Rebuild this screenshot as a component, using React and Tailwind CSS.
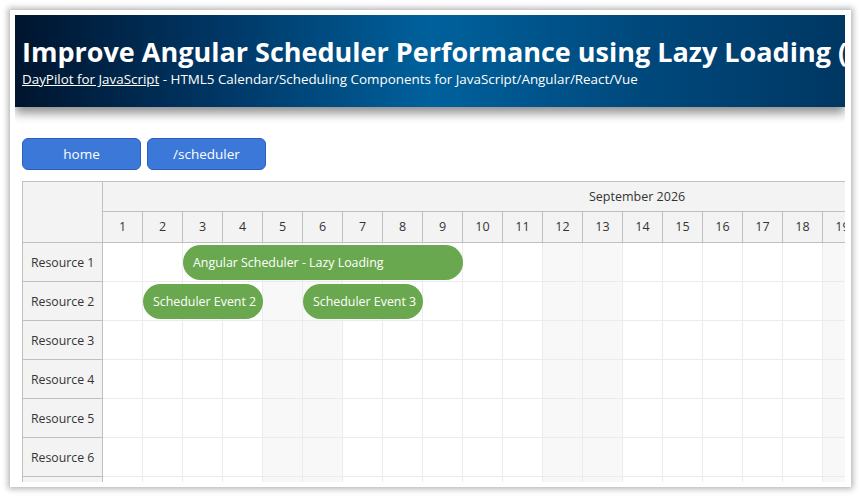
import React from "react"

const days = Array.from({ length: 20 }, (_, i) => i + 1)
const weekend = [5, 6, 12, 13, 19, 20]
const resources = ["Resource 1", "Resource 2", "Resource 3", "Resource 4", "Resource 5", "Resource 6", "Resource 7"]

const events = [
  { row: 0, start: 3, end: 9, text: "Angular Scheduler - Lazy Loading" },
  { row: 1, start: 2, end: 4, text: "Scheduler Event 2" },
  { row: 1, start: 6, end: 8, text: "Scheduler Event 3" },
]

const font = { fontFamily: '"Open Sans", "Noto Sans", sans-serif' }

function Scheduler() {
  return (
    <div className="border-l border-t border-[#c0c0c0] overflow-hidden flex" style={font}>
      {/* row headers */}
      <div className="w-[80px] shrink-0 bg-[#f3f3f3]">
        <div className="h-[61px] border-b border-r border-[#c0c0c0]" />
        {resources.map((r) => (
          <div key={r} className="h-[39px] border-b border-r border-[#c0c0c0] flex items-center pl-[8px] pt-[3px] text-[12.3px] text-[#333]">
            {r}
          </div>
        ))}
      </div>
      {/* timeline */}
      <div className="flex flex-col shrink-0">
        <div className="h-[30px] bg-[#f3f3f3] border-b border-[#c0c0c0] flex items-center pt-[2px] pl-[486px] text-[12.5px] text-[#333]">
          September 2026
        </div>
        <div className="flex h-[31px] bg-[#f3f3f3] border-b border-[#c0c0c0]">
          {days.map((d) => (
            <div key={d} className="w-[40px] shrink-0 border-r border-[#c0c0c0] flex items-center justify-center text-[12.5px] text-[#333]">
              {d}
            </div>
          ))}
        </div>
        {resources.map((r, ri) => (
          <div key={r} className="relative flex h-[39px]">
            {days.map((d) => (
              <div
                key={d}
                className={
                  "w-[40px] shrink-0 border-r border-b border-[#ebebeb] " +
                  (weekend.includes(d) ? "bg-[#f8f8f8]" : "bg-white")
                }
              />
            ))}
            {events
              .filter((e) => e.row === ri)
              .map((e) => (
                <div
                  key={e.text}
                  className="absolute top-[2px] h-[35px] rounded-full bg-[#6aa84f] text-white text-[12.4px] flex items-center pl-[10px] pt-[1px] whitespace-nowrap"
                  style={{ left: (e.start - 1) * 40, width: (e.end - e.start + 1) * 40 }}
                >
                  {e.text}
                </div>
              ))}
          </div>
        ))}
      </div>
    </div>
  )
}

export default function App() {
  return (
    <div className="w-[860px] h-[497px] bg-white overflow-hidden pt-[10px] pl-[10px]">
      <div className="w-[841px] h-[477px] bg-white shadow-[0_0_6px_2px_rgba(0,0,0,0.3)] pl-[5px] pr-[6px] pt-[5px] pb-[5px]">
        <div className="w-[830px] h-[467px] overflow-hidden bg-white">
          <div
            className="h-[92px] bg-[linear-gradient(to_right,#00152e_0%,#003766_25%,#00619c_50%,#00497d_75%,#003763_100%)] pl-[7px] pt-[20px] text-white shadow-[0_6px_10px_rgba(0,0,0,0.45)] relative"
            style={font}
          >
            <div className="text-[27px] font-bold leading-[34px] whitespace-nowrap">
              Improve Angular Scheduler Performance using Lazy Loading (Open-Source)
            </div>
            <div className="text-[13.4px] leading-[20px] whitespace-nowrap">
              <a className="underline">DayPilot for JavaScript</a> - HTML5 Calendar/Scheduling Components for JavaScript/Angular/React/Vue
            </div>
          </div>
          <div className="pl-[7px] pt-[31px]">
            <div className="flex gap-[6px]" style={font}>
              <button className="w-[119px] h-[32px] rounded-[6px] bg-[#3c78d8] border border-[#2a5fc0] text-white text-[13.5px] pt-[1px]">
                home
              </button>
              <button className="w-[119px] h-[32px] rounded-[6px] bg-[#3c78d8] border border-[#2a5fc0] text-white text-[13.5px] pt-[1px]">
                /scheduler
              </button>
            </div>
            <div className="mt-[11px]">
              <Scheduler />
            </div>
          </div>
        </div>
      </div>
    </div>
  )
}
